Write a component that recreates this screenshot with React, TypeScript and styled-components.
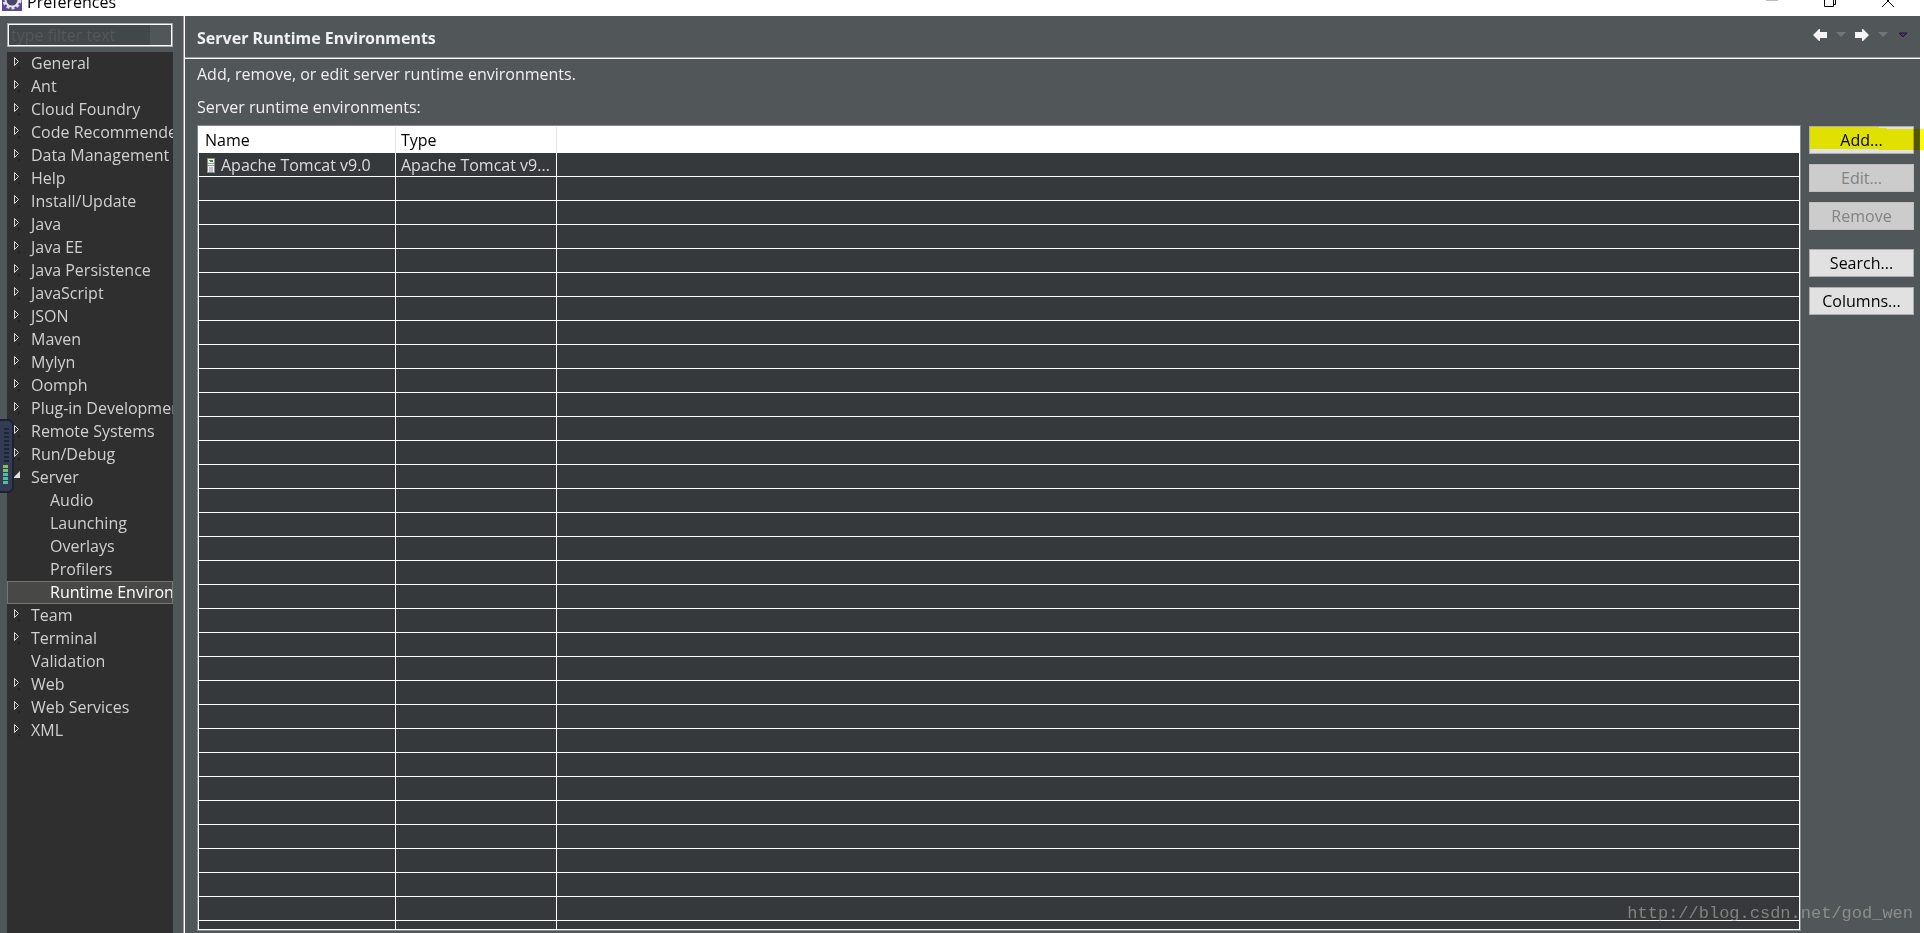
import React from "react";
import styled, { createGlobalStyle } from "styled-components";

const sans = `"Open Sans", "Noto Sans", "Noto Sans CJK SC", sans-serif`;

const GlobalStyle = createGlobalStyle`
  *, *::before, *::after { box-sizing: border-box; }
  html, body { margin: 0; }
  body { background: #fff; font: 16px/24px ${sans}; color: #f0f0f0; overflow: hidden; }
  button, input { font: inherit; }
`;

const Page = styled.div`
  height: 100vh;
  display: flex;
  flex-direction: column;
  position: relative;
`;

const TitleBar = styled.header`
  height: 16px;
  flex: none;
  display: flex;
  align-items: flex-end;
  justify-content: space-between;
  overflow: hidden;
  background: #fff;
  color: #000;
`;

const TitleText = styled.div`
  display: flex;
  align-items: flex-end;
  gap: 5px;
  padding-left: 2px;
  line-height: 28px;
  svg { margin-bottom: 5px; flex: none; }
`;

const WindowControls = styled.div`
  display: flex;
  align-items: flex-end;
  gap: 46px;
  padding: 0 30px 8px 0;
`;

const WindowButton = styled.button`
  border: 0;
  padding: 0;
  background: none;
  display: block;
  svg { display: block; }
`;

const Body = styled.div`
  flex: 1;
  min-height: 0;
  display: flex;
  margin-right: 4px;
  background: #515658;
`;

const Sidebar = styled.nav`
  width: 183px;
  flex: none;
  display: flex;
  flex-direction: column;
  gap: 5px;
  padding: 7px 10px 0 7px;
`;

const FilterInput = styled.input`
  height: 24px;
  flex: none;
  width: 100%;
  padding: 0 3px;
  border: 1px solid #a3a5a6;
  box-shadow: inset 0 0 0 1px #fff;
  outline: 0;
  border-radius: 0;
  color: #f0f0f0;
  background: linear-gradient(to right, #42474a 142px, #515658 142px);
  &::placeholder { color: #55585a; opacity: 1; }
`;

const Tree = styled.ul`
  flex: 1;
  min-height: 0;
  margin: 0;
  padding: 0;
  list-style: none;
  overflow: hidden;
  background: #2f2f2f;
`;

const TreeItem = styled.li<{ $child?: boolean; $selected?: boolean }>`
  height: 23px;
  display: flex;
  align-items: flex-start;
  padding-left: ${(p) => (p.$child ? 23 : 4)}px;
  white-space: nowrap;
  line-height: 22px;
  color: ${(p) => (p.$selected ? "#fff" : "#d0d0d0")};
  background: ${(p) => (p.$selected ? "#484848" : "transparent")};
  outline: ${(p) => (p.$selected ? "1px solid #77776a" : "none")};
  outline-offset: -1px;
`;

const Twisty = styled.span`
  width: 20px;
  height: 20px;
  flex: none;
  svg { display: block; }
`;

const Main = styled.main`
  flex: 1;
  min-width: 0;
  display: flex;
  flex-direction: column;
  border-left: 1px solid #a09c9b;
  box-shadow: inset 1px 0 #fff;
  padding-left: 1px;
`;

const PageHeader = styled.div`
  height: 43px;
  flex: none;
  display: flex;
  align-items: center;
  justify-content: space-between;
  padding: 2px 7px 0 12px;
  border-bottom: 1px solid #fff;
  box-shadow: inset 0 -1px #a09c9b;
`;

const Heading = styled.h1`
  margin: 0;
  font: 700 16px/24px "Noto Sans", sans-serif;
`;

const Toolbar = styled.div`
  display: flex;
  align-items: center;
  padding-bottom: 7px;
`;

const ToolButton = styled.button<{ $wide?: boolean }>`
  width: ${(p) => (p.$wide ? 22 : 20)}px;
  height: 20px;
  border: 0;
  padding: 0;
  background: none;
  display: flex;
  align-items: center;
  justify-content: center;
`;

const Content = styled.div`
  flex: 1;
  min-height: 0;
  display: flex;
  flex-direction: column;
  padding: 3px 6px 2px 12px;
`;

const Description = styled.p`
  margin: 0 0 9px;
`;

const TableLabel = styled.h2`
  margin: 0;
  font-size: 16px;
  line-height: 24px;
  font-weight: 400;
`;

const Columns = styled.div`
  flex: 1;
  min-height: 0;
  display: flex;
  gap: 8px;
  margin-top: 6px;
`;

const TableFrame = styled.div`
  flex: 1;
  min-width: 0;
  overflow: hidden;
  border: 1px solid #85888a;
  outline: 1px solid #fff;
  outline-offset: -2px;
  padding: 0 1px 1px;
`;

const Table = styled.table`
  width: 100%;
  border-collapse: separate;
  border-spacing: 0;
  table-layout: fixed;
  background: #35393b;
`;

const HeadCell = styled.th`
  height: 27px;
  padding: 0 5px;
  text-align: left;
  font-weight: 400;
  line-height: 24px;
  color: #000;
  background: #fff;
  border-right: 1px solid #e5e5e5;
  &:first-child { padding-left: 6px; }
  &:last-child { border-right: 0; }
`;

const Cell = styled.td`
  height: 24px;
  padding: 2px 5px 0;
  line-height: 21px;
  white-space: nowrap;
  overflow: hidden;
  color: #dcdcdc;
  border-right: 1px solid #fff;
  border-bottom: 1px solid #fff;
  &:last-child { border-right: 0; }
`;

const IconLabel = styled.span`
  display: flex;
  align-items: center;
  gap: 6px;
  padding-left: 3px;
`;

const Actions = styled.div`
  width: 105px;
  flex: none;
  display: flex;
  flex-direction: column;
  gap: 10px;
  padding-top: 1px;
`;

const ActionButton = styled.button<{ $spaced?: boolean }>`
  height: 28px;
  flex: none;
  padding: 0;
  margin-top: ${(p) => (p.$spaced ? 9 : 0)}px;
  border: 1px solid #adadad;
  background: #e1e1e1;
  color: #000;
  line-height: 24px;
  position: relative;
  &:disabled { background: #ccc; color: #838383; border-color: #bfbfbf; }
`;

const Marker = styled.svg`
  position: absolute;
  left: -1px;
  top: -1px;
  mix-blend-mode: multiply;
  pointer-events: none;
`;

const VolumeGadget = styled.div`
  position: absolute;
  left: 0;
  top: 419px;
  svg { display: block; }
`;

const Watermark = styled.div`
  position: absolute;
  right: 11px;
  bottom: 7px;
  font: 17px/24px "Liberation Mono", monospace;
  color: rgba(180, 180, 170, 0.6);
`;

type Node = { name: string; kind?: "open" | "leaf" | "child"; selected?: boolean };

const nodes: Node[] = [
  ...["General", "Ant", "Cloud Foundry", "Code Recommenders", "Data Management", "Help", "Install/Update", "Java", "Java EE", "Java Persistence", "JavaScript", "JSON", "Maven", "Mylyn", "Oomph", "Plug-in Development", "Remote Systems", "Run/Debug"].map((name) => ({ name })),
  { name: "Server", kind: "open" },
  { name: "Audio", kind: "child" },
  { name: "Launching", kind: "child" },
  { name: "Overlays", kind: "child" },
  { name: "Profilers", kind: "child" },
  { name: "Runtime Environments", kind: "child", selected: true },
  { name: "Team" },
  { name: "Terminal" },
  { name: "Validation", kind: "leaf" },
  { name: "Web" },
  { name: "Web Services" },
  { name: "XML" },
];

const TwistyIcon = ({ kind }: { kind?: Node["kind"] }) => (
  <Twisty>
    {!kind && (
      <svg width="20" height="20" viewBox="0 0 20 20">
        <path d="M3.5 5.500v8l4-4z" fill="none" stroke="#d8d8d8" />
        <path d="M7 16h2M7 17h1" stroke="#161616" />
      </svg>
    )}
    {kind === "open" && (
      <svg width="20" height="20" viewBox="0 0 20 20">
        <path d="M9 5v7H3v-1z" fill="#e0e0e0" />
      </svg>
    )}
  </Twisty>
);

const EclipseIcon = () => (
  <svg width="20" height="20" viewBox="0 0 20 20">
    <rect width="20" height="20" fill="#5b4890" />
    <circle cx="10" cy="9" r="8" fill="none" stroke="#dddbe2" strokeWidth="3" strokeDasharray="3 2" />
    <circle cx="10" cy="9" r="6.5" fill="#4b4769" stroke="#e9e7ee" strokeWidth="2" />
  </svg>
);

const ServerIcon = () => (
  <svg width="8" height="15" viewBox="0 0 8 15">
    <rect x=".5" y=".5" width="7" height="14" fill="#f3f4ea" stroke="#8b8d7d" />
    <path d="M2 2.5h2" stroke="#7d9a7d" />
    <path d="M3 3h3" stroke="#1c9a3c" strokeWidth="2" />
    <path d="M1 5.5h6M1 7.5h6" stroke="#9aa08e" />
    <rect x="2" y="9" width="4" height="5" fill="#b9bfe4" />
  </svg>
);

const Arrow = ({ forward }: { forward?: boolean }) => (
  <svg width="14" height="12" viewBox="0 0 14 12">
    <path d={forward ? "M0 3h7V0h1l6 6-6 6H7V9H0z" : "M14 3H7V0H6L0 6l6 6h1V9h7z"} fill="#f4f4f4" />
  </svg>
);

const Caret = () => (
  <svg width="10" height="5" viewBox="0 0 10 5"><path d="M0 0h10L5 5z" fill="#737579" /></svg>
);

const blankRows = Array.from({ length: 32 }, (_, i) => i);

export default function App() {
  return (
    <Page>
      <GlobalStyle />
      <TitleBar>
        <TitleText><EclipseIcon />Preferences</TitleText>
        <WindowControls>
          <WindowButton aria-label="Minimize"><svg width="12" height="8"><path d="M0 .5h12" stroke="#bbb" /></svg></WindowButton>
          <WindowButton aria-label="Restore"><svg width="12" height="8"><path d="M.5 0v6.500h9V0M9.500 4.500h2V0" fill="none" stroke="#000" /></svg></WindowButton>
          <WindowButton aria-label="Close"><svg width="12" height="8"><path d="M0 7L6 1l6 6M5 0l1 1 1-1" fill="none" stroke="#000" /></svg></WindowButton>
        </WindowControls>
      </TitleBar>
      <Body>
        <Sidebar>
          <FilterInput aria-label="Filter preferences" placeholder="type filter text" />
          <Tree>
            {nodes.map((n) => (
              <TreeItem key={n.name} $child={n.kind === "child"} $selected={n.selected}>
                <TwistyIcon kind={n.kind} />
                {n.name}
              </TreeItem>
            ))}
          </Tree>
        </Sidebar>
        <Main>
          <PageHeader>
            <Heading>Server Runtime Environments</Heading>
            <Toolbar>
              <ToolButton $wide aria-label="Back"><Arrow /></ToolButton>
              <ToolButton aria-label="Back history"><Caret /></ToolButton>
              <ToolButton $wide aria-label="Forward"><Arrow forward /></ToolButton>
              <ToolButton aria-label="Forward history"><Caret /></ToolButton>
              <ToolButton aria-label="Menu">
                <svg width="10" height="6" viewBox="0 0 10 6"><path d="M1 1h8L5 5z" fill="#4b3a5d" stroke="#25103f" /></svg>
              </ToolButton>
            </Toolbar>
          </PageHeader>
          <Content>
            <Description>Add, remove, or edit server runtime environments.</Description>
            <TableLabel id="runtimes">Server runtime environments:</TableLabel>
            <Columns>
              <TableFrame>
                <Table aria-labelledby="runtimes">
                  <colgroup><col style={{ width: 197 }} /><col style={{ width: 161 }} /><col /></colgroup>
                  <thead><tr><HeadCell>Name</HeadCell><HeadCell>Type</HeadCell><HeadCell /></tr></thead>
                  <tbody>
                    <tr>
                      <Cell><IconLabel><ServerIcon />Apache Tomcat v9.0</IconLabel></Cell>
                      <Cell>Apache Tomcat v9...</Cell>
                      <Cell />
                    </tr>
                    {blankRows.map((i) => <tr key={i}><Cell /><Cell /><Cell /></tr>)}
                  </tbody>
                </Table>
              </TableFrame>
              <Actions>
                <ActionButton>
                  Add...
                  <Marker width="115" height="28"><path d="M1 1h69v1h8v1h37v21H70v-1H1z" fill="#ff0" /></Marker>
                </ActionButton>
                <ActionButton disabled>Edit...</ActionButton>
                <ActionButton disabled>Remove</ActionButton>
                <ActionButton $spaced>Search...</ActionButton>
                <ActionButton>Columns...</ActionButton>
              </Actions>
            </Columns>
          </Content>
        </Main>
      </Body>
      <VolumeGadget>
        <svg width="14" height="74" viewBox="0 0 14 74">
          <path d="M0 0h10l4 4v66l-4 4H0z" fill="#1d2230" />
          <path d="M0 2h9l3 3v64l-3 3H0z" fill="#353b52" />
          <path d="M6.500 9v36" stroke="#1f2436" strokeWidth="5" strokeDasharray="2 2" />
          <path d="M5.500 46v8" stroke="#7cc070" strokeWidth="5" strokeDasharray="3 1" />
          <path d="M5.500 54v12" stroke="#4cbfa0" strokeWidth="5" strokeDasharray="3 1" />
        </svg>
      </VolumeGadget>
      <Watermark>http://blog.csdn.net/god_wen</Watermark>
    </Page>
  );
}
